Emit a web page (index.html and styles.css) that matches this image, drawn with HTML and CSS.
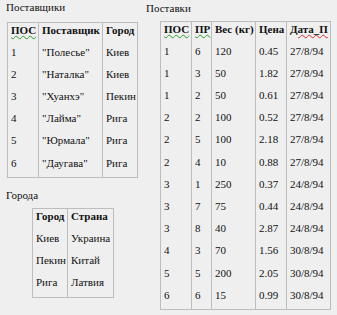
FILE: index.html
```html
<!DOCTYPE html>
<html lang="ru">
<head>
<meta charset="utf-8">
<link rel="stylesheet" href="styles.css">
</head>
<body>
<div class="page">
  <div class="left">
    <div class="title">Поставщики</div>
    <table class="grid t1">
      <colgroup><col class="c31"><col class="c64"><col class="c35"></colgroup>
      <tr class="head"><td><span class="sp">ПОС</span></td><td>Поставщик</td><td>Город</td></tr>
      <tr><td>1</td><td>"Полесье"</td><td>Киев</td></tr>
      <tr><td>2</td><td>"Наталка"</td><td>Киев</td></tr>
      <tr><td>3</td><td>"Хуанхэ"</td><td>Пекин</td></tr>
      <tr><td>4</td><td>"Лайма"</td><td>Рига</td></tr>
      <tr><td>5</td><td>"Юрмала"</td><td>Рига</td></tr>
      <tr><td>6</td><td>"Даугава"</td><td>Рига</td></tr>
    </table>
    <div class="title t-cities">Города</div>
    <table class="grid t2">
      <colgroup><col class="c35"><col class="c46"></colgroup>
      <tr class="head"><td>Город</td><td>Страна</td></tr>
      <tr><td>Киев</td><td>Украина</td></tr>
      <tr><td>Пекин</td><td>Китай</td></tr>
      <tr><td>Рига</td><td>Латвия</td></tr>
    </table>
  </div>
  <div class="right">
    <div class="title t-supp">Поставки</div>
    <table class="grid t3">
      <colgroup><col class="c31"><col class="c20"><col class="c44"><col class="c31"><col class="c44"></colgroup>
      <tr class="head"><td><span class="sp">ПОС</span></td><td><span class="sp">ПР</span></td><td>Вес (кг)</td><td>Цена</td><td><span class="sp red">Дата_П</span></td></tr>
      <tr><td>1</td><td>6</td><td>120</td><td>0.45</td><td>27/8/94</td></tr>
      <tr><td>1</td><td>3</td><td>50</td><td>1.82</td><td>27/8/94</td></tr>
      <tr><td>1</td><td>2</td><td>50</td><td>0.61</td><td>27/8/94</td></tr>
      <tr><td>2</td><td>2</td><td>100</td><td>0.52</td><td>27/8/94</td></tr>
      <tr><td>2</td><td>5</td><td>100</td><td>2.18</td><td>27/8/94</td></tr>
      <tr><td>2</td><td>4</td><td>10</td><td>0.88</td><td>27/8/94</td></tr>
      <tr><td>3</td><td>1</td><td>250</td><td>0.37</td><td>24/8/94</td></tr>
      <tr><td>3</td><td>7</td><td>75</td><td>0.44</td><td>24/8/94</td></tr>
      <tr><td>3</td><td>8</td><td>40</td><td>2.87</td><td>24/8/94</td></tr>
      <tr><td>4</td><td>3</td><td>70</td><td>1.56</td><td>30/8/94</td></tr>
      <tr><td>5</td><td>5</td><td>200</td><td>2.05</td><td>30/8/94</td></tr>
      <tr><td>6</td><td>6</td><td>15</td><td>0.99</td><td>30/8/94</td></tr>
    </table>
  </div>
</div>
</body>
</html>
```

FILE: styles.css
```css
html, body {
  margin: 0;
  background: #efefef;
}
body {
  font-family: "Liberation Serif", "Times New Roman", serif;
  font-size: 11px;
  line-height: 13px;
  color: #111;
}
.page {
  display: flex;
  padding: 1px 0 0 6px;
}
.left {
  width: 140px;
}
.title {
  height: 13px;
  margin-bottom: 8px;
}
.t-cities {
  margin-top: 11px;
  margin-bottom: 6px;
}
.t-supp {
  margin-top: 1px;
  margin-bottom: 6px;
}
.grid {
  border-collapse: collapse;
  table-layout: fixed;
  border: 1px solid #bdbdbd;
}
.grid tr {
  height: 22.2px;
}
.grid td {
  border-left: 1px solid #bdbdbd;
  padding: 1px 1px 0 3px;
  vertical-align: top;
  white-space: nowrap;
  overflow: hidden;
}
.head td {
  font-weight: bold;
}
.t1 { margin-left: 1px; width: 130px; }
.t2 { margin-left: 26px; width: 81px; }
.t3 { margin-left: 14px; width: 170px; }
.c20 { width: 20px; }
.c31 { width: 31px; }
.c35 { width: 35px; }
.c44 { width: 44px; }
.c46 { width: 46px; }
.c64 { width: 64px; }
.sp {
  text-decoration: underline wavy #2f9a2f;
  text-decoration-thickness: 1px;
  text-underline-offset: 1px;
}
.sp.red {
  text-decoration-color: #d03030;
}
```
